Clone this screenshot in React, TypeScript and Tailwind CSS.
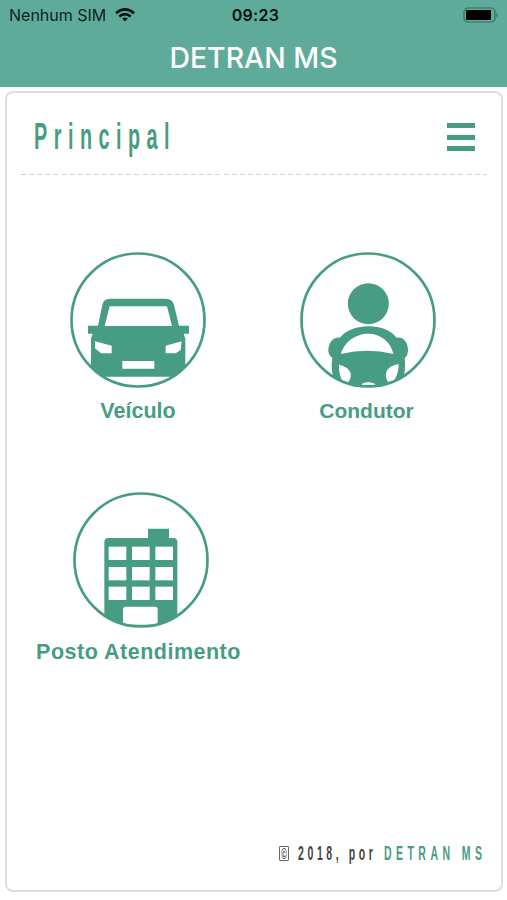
import React from 'react';

const VehicleIcon = () => (
  <svg viewBox="30 22 408 408" className="w-[136px] h-[136px] block" fill="#479d83">
    <clipPath id="vehicle-clip">
      <circle cx="234" cy="226" r="201" />
    </clipPath>
    <g clipPath="url(#vehicle-clip)">
      <path
        fillRule="evenodd"
        d="M84 243H114L127 181Q131 162 150 162H318Q337 162 342 181L357 243H387V267H371L376 282V396H93V282L98 267H84ZM149 185L134 244H336L321 185ZM105 290L155 303V326H123L105 311ZM365 290L317 303V326H347L362 316ZM187 349V372H283V349Z"
      />
    </g>
    <circle cx="234" cy="226" r="199.5" fill="none" stroke="#479d83" strokeWidth="8" />
  </svg>
);

const DriverIcon = () => (
  <svg viewBox="30 22 408 408" className="w-[136px] h-[136px] block" fill="#479d83">
    <clipPath id="driver-clip">
      <circle cx="234" cy="226" r="201" />
    </clipPath>
    <circle cx="235" cy="177" r="61.5" />
    <g clipPath="url(#driver-clip)">
      {/* Steering wheel */}
      <path
        fillRule="evenodd"
        d="M150 279C168 256 202 245 236 245C270 245 302 256 320 279C344 276 355 298 354 319C353 331 348 338 344 340C348 365 344 400 330 430H142C126 400 122 366 127 339C119 335 114 324 115 314C117 294 128 277 150 279ZM153 328Q232 308 310 328C303 291 271 267 235 267C198 267 162 291 153 328ZM147 360C146 386 153 408 166 417C180 412 185 397 181 383C176 371 163 364 147 360ZM326 358C307 362 294 369 289 382C285 397 291 413 302 416C317 407 326 384 326 358Z"
      />
      <path d="M214 421Q218 413 235 413Q252 413 257 421Z" fill="white" />
    </g>
    <circle cx="234" cy="226" r="199.5" fill="none" stroke="#479d83" strokeWidth="8" />
  </svg>
);

const BuildingIcon = () => (
  <svg viewBox="131 22 408 408" className="w-[136px] h-[136px] block" fill="#479d83">
    <clipPath id="building-clip">
      <circle cx="335" cy="226" r="201" />
    </clipPath>
    <g clipPath="url(#building-clip)">
      <path d="M225 430V172Q225 160 237 160H356V132H419V160H431Q444 160 444 172V430Z" />
      {[186, 247, 306].map((y) => (
        <g key={y} fill="white">
          <rect x="238" y={y} width="53" height="40" />
          <rect x="308" y={y} width="53" height="40" />
          <rect x="378" y={y} width="53" height="40" />
        </g>
      ))}
      <path d="M281 420V374Q281 366 289 366H377Q385 366 385 374V420Z" fill="white" />
    </g>
    <circle cx="335" cy="226" r="199.5" fill="none" stroke="#479d83" strokeWidth="8" />
  </svg>
);

const App = () => {
  const items = [
    { id: 1, label: 'Veículo', icon: <VehicleIcon />, iconClass: '', labelClass: 'text-[21.5px] mt-[11px]' },
    { id: 2, label: 'Condutor', icon: <DriverIcon />, iconClass: '-ml-[1px]', labelClass: 'text-[21px] mt-[11px] -ml-[3px]' },
    { id: 3, label: 'Posto Atendimento', icon: <BuildingIcon />, iconClass: 'ml-[6px]', labelClass: 'text-[21.5px] tracking-[0.5px] mt-[12px] ml-[1px]' }
  ];

  return (
    <div className="w-[507px] h-[900px] bg-white overflow-hidden font-['Inter',sans-serif]">
      {/* Header */}
      <header className="h-[87px] bg-[#5fab99]">
        <div className="h-[30px] pl-[9px] pr-[8px] grid grid-cols-3 items-center text-[#10231e]">
          <div className="flex items-center gap-[9px]">
            <span className="text-[16px] whitespace-nowrap">Nenhum SIM</span>
            <svg viewBox="0 0 20 14" className="w-[20px] h-[14px]" fill="none" stroke="#07110e" strokeWidth="2.6">
              <path d="M1 5.2Q10 -2.5 19 5.2" />
              <path d="M4.3 8.6Q10 3.6 15.7 8.6" />
              <path d="M7.2 10.6Q10 8.4 12.8 10.6L10 13.5Z" fill="#07110e" stroke="none" />
            </svg>
          </div>
          <span className="text-center text-[16px] font-semibold tracking-[0.3px] text-[#07110e] pl-[3px]">09:23</span>
          <svg viewBox="0 0 36 16" className="w-[36px] h-[16px] justify-self-end">
            <rect x="1" y="1" width="31" height="14" rx="4" fill="none" stroke="#346e5f" strokeWidth="1.2" />
            <rect x="3" y="3" width="25" height="10" rx="1" fill="#000" />
            <path d="M33.5 5.5Q36 8 33.5 10.5Z" fill="#346e5f" />
          </svg>
        </div>
        <h1 className="text-center text-white text-[28.4px] leading-[56px] font-medium">DETRAN MS</h1>
      </header>

      {/* Card */}
      <main className="mt-[4px] ml-[5px] mr-[4px] h-[801px] border-2 border-[#dedede] rounded-[8px] flex flex-col">
        <div className="mx-[14px] h-[81px] flex justify-between pl-[13px] pr-[12px]">
          <h2 className="w-[140px] h-[40px] mt-[24px] text-[36px] leading-[40px] font-bold text-[#479d83] font-['Liberation_Sans',sans-serif] tracking-[11.8px] whitespace-nowrap origin-left scale-x-[0.55]">
            Principal
          </h2>
          <button className="w-[28px] mt-[30px] h-[28px] flex flex-col justify-between">
            <span className="block w-full h-[5px] bg-[#479d83]"></span>
            <span className="block w-full h-[5px] bg-[#479d83]"></span>
            <span className="block w-full h-[5px] bg-[#479d83]"></span>
          </button>
        </div>
        <div className="mx-[14px] h-px bg-[repeating-linear-gradient(90deg,#d2d2d2_0_5px,transparent_5px_8.1px)]"></div>

        <div className="pt-[77px] pl-[16px] grid grid-cols-[230px_230px] auto-rows-[240px]">
          {items.map((item) => (
            <div key={item.id} className="flex flex-col items-center">
              <div className={item.iconClass}>{item.icon}</div>
              <span className={`leading-[24px] font-bold text-[#479d83] whitespace-nowrap font-['Liberation_Sans',sans-serif] ${item.labelClass}`}>
                {item.label}
              </span>
            </div>
          ))}
        </div>

        {/* Footer */}
        <footer className="mt-auto mb-[24px] pr-[16px] flex justify-end">
          <p className="w-[206px] flex items-center text-[21px] leading-[26px] font-bold text-[#444] font-['Liberation_Sans',sans-serif] whitespace-pre origin-left scale-x-[0.5]">
            <span className="shrink-0 w-[20px] h-[15px] border-x-2 border-y border-[#666] rounded-[2px] flex items-center justify-center text-[15px] leading-[13px]">©</span>
            <span className="shrink-0 ml-[18px] w-[172px] tracking-[7.2px]">2018, por</span>
            <span className="shrink-0 text-[#479d83] tracking-[8.9px]">DETRAN MS</span>
          </p>
        </footer>
      </main>
    </div>
  );
};

export default App;
